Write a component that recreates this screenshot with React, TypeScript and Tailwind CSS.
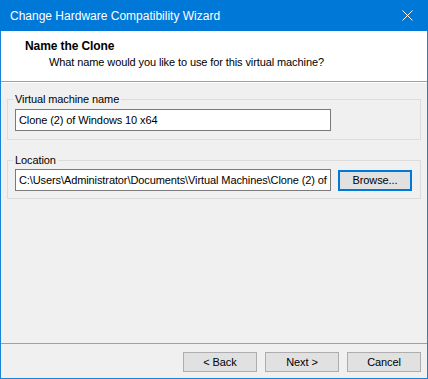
const WizardButton = ({ label }: { label: string }) => (
  <button className="w-[74px] h-[20px] bg-[#e1e1e1] border border-[#adadad] leading-none text-black">
    {label}
  </button>
);

const App = () => {
  return (
    <div className="w-[428px] h-[379px] flex flex-col bg-[#f0f0f0] border-x border-b border-[#1883d7] font-['Liberation_Sans',Arial,sans-serif] text-[11px] tracking-[-0.1px] text-black">
      {/* title bar */}
      <div className="h-[31px] -mx-px bg-[#0078d7] flex items-center justify-between pl-[10px] pr-[10px] shrink-0">
        <span className="text-white text-[12px] tracking-normal">Change Hardware Compatibility Wizard</span>
        <svg width="11" height="11" viewBox="0 0 11 11" className="mr-[5px]">
          <path d="M0.5 0.5 L10.5 10.5 M10.5 0.5 L0.5 10.5" stroke="#fff" strokeWidth="1" />
        </svg>
      </div>

      {/* header */}
      <div className="h-[51px] bg-white border-b border-[#a0a0a0] pl-[24px] pt-[7px] shrink-0">
        <div className="font-bold text-[12px] leading-[16px]">Name the Clone</div>
        <div className="pl-[24px] leading-[16px]">What name would you like to use for this virtual machine?</div>
      </div>
      <div className="h-px bg-white shrink-0" />

      <div className="flex-1 flex flex-col gap-[12px] pt-[8px]">
        <fieldset className="mx-[6px] border border-[#dcdcdc] px-[7px] pb-[8px]">
          <legend className="leading-[16px] px-[2px] -ml-[2px]">Virtual machine name</legend>
          <div className="mt-[2px] w-[316px] h-[22px] bg-white border border-[#7a7a7a] flex items-center px-[3px] leading-none">
            Clone (2) of Windows 10 x64
          </div>
        </fieldset>

        <fieldset className="mx-[6px] border border-[#dcdcdc] px-[7px] pb-[7px]">
          <legend className="leading-[16px] px-[2px] -ml-[2px]">Location</legend>
          <div className="mt-[1px] flex items-center gap-[7px]">
            <div className="w-[316px] h-[22px] bg-white border border-[#7a7a7a] flex items-center px-[3px] overflow-hidden whitespace-nowrap leading-none">
              C:\Users\Administrator\Documents\Virtual Machines\Clone (2) of
            </div>
            <button className="w-[74px] h-[21px] bg-[#e1e1e1] border-2 border-[#0078d7] leading-none">
              Browse...
            </button>
          </div>
        </fieldset>
      </div>

      {/* footer */}
      <div className="h-px bg-[#a0a0a0] shrink-0" />
      <div className="h-[34px] flex items-start justify-end gap-[8px] pt-[8px] pr-[6px] shrink-0">
        <WizardButton label="< Back" />
        <WizardButton label="Next >" />
        <WizardButton label="Cancel" />
      </div>
    </div>
  );
};

export default App;
